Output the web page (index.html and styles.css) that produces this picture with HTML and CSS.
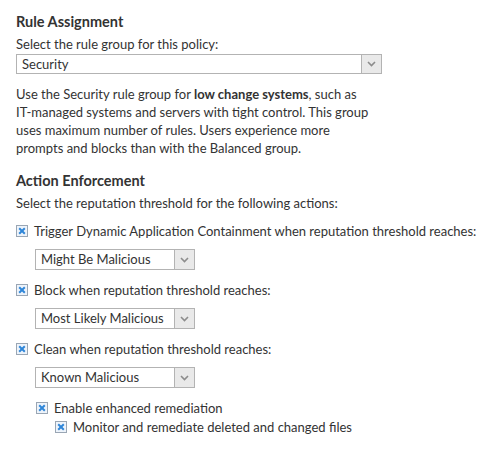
FILE: index.html
```html
<!DOCTYPE html>
<html>
<head>
<meta charset="utf-8">
<link rel="stylesheet" href="styles.css">
</head>
<body>
<div class="page">
  <h2 class="heading">Rule Assignment</h2>
  <div class="label">Select the rule group for this policy:</div>
  <div class="select select-wide">
    <span class="select-text">Security</span>
    <span class="select-btn"><svg width="9" height="6" viewBox="0 0 9 6"><path d="M1 1 L4.5 4.5 L8 1" fill="none" stroke="#8c8c8c" stroke-width="1.6"/></svg></span>
  </div>
  <p class="desc">Use the Security rule group for <b>low change systems</b>, such as<br>IT-managed systems and servers with tight control. This group<br>uses maximum number of rules. Users experience more<br>prompts and blocks than with the Balanced group.</p>

  <h2 class="heading heading-2">Action Enforcement</h2>
  <div class="label">Select the reputation threshold for the following actions:</div>

  <div class="check-row row-1">
    <span class="cb"><svg width="12" height="12" viewBox="0 0 12 12"><rect x="0.5" y="0.5" width="11" height="11" fill="#eef4fb" stroke="#9aa6b4"/><path d="M3.2 3.2 L8.8 8.8 M8.8 3.2 L3.2 8.8" stroke="#2f86d8" stroke-width="2"/></svg></span>
    <span>Trigger Dynamic Application Containment when reputation threshold reaches:</span>
  </div>
  <div class="select select-small">
    <span class="select-text">Might Be Malicious</span>
    <span class="select-btn"><svg width="9" height="6" viewBox="0 0 9 6"><path d="M1 1 L4.5 4.5 L8 1" fill="none" stroke="#8c8c8c" stroke-width="1.6"/></svg></span>
  </div>

  <div class="check-row">
    <span class="cb"><svg width="12" height="12" viewBox="0 0 12 12"><rect x="0.5" y="0.5" width="11" height="11" fill="#eef4fb" stroke="#9aa6b4"/><path d="M3.2 3.2 L8.8 8.8 M8.8 3.2 L3.2 8.8" stroke="#2f86d8" stroke-width="2"/></svg></span>
    <span>Block when reputation threshold reaches:</span>
  </div>
  <div class="select select-small">
    <span class="select-text">Most Likely Malicious</span>
    <span class="select-btn"><svg width="9" height="6" viewBox="0 0 9 6"><path d="M1 1 L4.5 4.5 L8 1" fill="none" stroke="#8c8c8c" stroke-width="1.6"/></svg></span>
  </div>

  <div class="check-row">
    <span class="cb"><svg width="12" height="12" viewBox="0 0 12 12"><rect x="0.5" y="0.5" width="11" height="11" fill="#eef4fb" stroke="#9aa6b4"/><path d="M3.2 3.2 L8.8 8.8 M8.8 3.2 L3.2 8.8" stroke="#2f86d8" stroke-width="2"/></svg></span>
    <span>Clean when reputation threshold reaches:</span>
  </div>
  <div class="select select-small">
    <span class="select-text">Known Malicious</span>
    <span class="select-btn"><svg width="9" height="6" viewBox="0 0 9 6"><path d="M1 1 L4.5 4.5 L8 1" fill="none" stroke="#8c8c8c" stroke-width="1.6"/></svg></span>
  </div>

  <div class="check-row sub-1">
    <span class="cb"><svg width="12" height="12" viewBox="0 0 12 12"><rect x="0.5" y="0.5" width="11" height="11" fill="#eef4fb" stroke="#9aa6b4"/><path d="M3.2 3.2 L8.8 8.8 M8.8 3.2 L3.2 8.8" stroke="#2f86d8" stroke-width="2"/></svg></span>
    <span>Enable enhanced remediation</span>
  </div>
  <div class="check-row sub-2">
    <span class="cb"><svg width="12" height="12" viewBox="0 0 12 12"><rect x="0.5" y="0.5" width="11" height="11" fill="#eef4fb" stroke="#9aa6b4"/><path d="M3.2 3.2 L8.8 8.8 M8.8 3.2 L3.2 8.8" stroke="#2f86d8" stroke-width="2"/></svg></span>
    <span>Monitor and remediate deleted and changed files</span>
  </div>
</div>
</body>
</html>
```
FILE: styles.css
```css
html, body {
  margin: 0;
  padding: 0;
  background: #ffffff;
}
body {
  font-family: Lato, "Open Sans", sans-serif;
  font-size: 13px;
  color: #333333;
}
.page {
  padding: 13px 16px 0 16px;
}
.heading {
  font-size: 14.5px;
  font-weight: bold;
  margin: 0;
  line-height: 18px;
  color: #333333;
}
.heading-2 {
  margin-top: 15px;
}
.label {
  line-height: 18px;
  margin-top: 4px;
}
.select {
  display: flex;
  align-items: stretch;
  border: 1px solid #b3b3b3;
  height: 18px;
  background: #fff;
  box-sizing: content-box;
}
.select-wide {
  width: 364px;
  margin-top: 1px;
}
.select-small {
  width: 158px;
  margin-left: 19px;
  margin-top: 9px;
  height: 19px;
}
.select-text {
  flex: 1;
  padding-left: 5px;
  line-height: 18px;
}
.select-small .select-text {
  line-height: 19px;
}
.select-btn {
  width: 19px;
  border-left: 1px solid #b3b3b3;
  background: #e9e9e9;
  display: flex;
  align-items: center;
  justify-content: center;
}
.desc {
  margin: 11px 0 0 0;
  line-height: 18px;
}
.desc b {
  font-weight: bold;
}
.check-row {
  display: flex;
  align-items: center;
  gap: 6px;
  line-height: 18px;
  margin-top: 11px;
}
.row-1 {
  margin-top: 10px;
}
.cb {
  display: flex;
  width: 12px;
  height: 12px;
}
.sub-1 {
  margin-left: 20px;
  margin-top: 11px;
}
.sub-2 {
  margin-left: 39px;
  margin-top: 1px;
}
```
